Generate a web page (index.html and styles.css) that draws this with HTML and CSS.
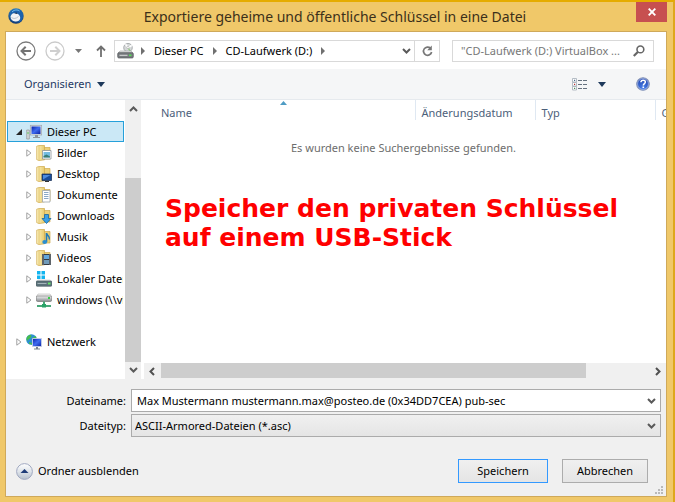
FILE: index.html
```html
<!DOCTYPE html>
<html lang="de">
<head>
<meta charset="utf-8">
<title>Exportiere geheime und öffentliche Schlüssel in eine Datei</title>
<link rel="stylesheet" href="styles.css">
</head>
<body>
<svg class="defs" width="0" height="0" aria-hidden="true">
  <defs>
    <linearGradient id="gold" x1="0" x2="1" y1="0" y2="0"><stop offset="0" stop-color="#fdf3c0"/><stop offset="1" stop-color="#e8cb6c"/></linearGradient>
    <linearGradient id="steel" x1="0" x2="0" y1="0" y2="1"><stop offset="0" stop-color="#f1f2f3"/><stop offset="1" stop-color="#85898d"/></linearGradient>
    <linearGradient id="screen" x1="0" x2="1" y1="0" y2="1"><stop offset="0" stop-color="#0820a8"/><stop offset="0.5" stop-color="#3f6cf0"/><stop offset="1" stop-color="#0a1fa0"/></linearGradient>
    <radialGradient id="bluebird" cx="0.5" cy="0.3" r="0.7"><stop offset="0" stop-color="#45b0ec"/><stop offset="1" stop-color="#0d3472"/></radialGradient>
    <radialGradient id="helpblue" cx="0.5" cy="0.8" r="0.8"><stop offset="0" stop-color="#4b82ec"/><stop offset="1" stop-color="#1b3da6"/></radialGradient>
    <linearGradient id="knob" x1="0" x2="0" y1="0" y2="1"><stop offset="0" stop-color="#ffffff"/><stop offset="0.5" stop-color="#dfe4ea"/><stop offset="1" stop-color="#b4bfcc"/></linearGradient>
  </defs>
  <symbol id="twig" viewBox="0 0 6 8"><path d="M.8.8 5 4 .8 7.200z" fill="#fff" stroke="#a0a0a0"/></symbol>
  <symbol id="folder" viewBox="0 0 16 16">
    <path d="M5 2.500h9v11.500H5z" fill="#ecd078" stroke="#cfa94a" stroke-width=".7"/>
    <path d="M.7 1.200 3 .5h5.500v14.300L3 15.600l-2.300-1z" fill="url(#gold)" stroke="#cfa94a" stroke-width=".7"/>
    <path d="M3 1v14.500" stroke="#dfc069" stroke-width=".8"/>
  </symbol>
  <symbol id="chev-down" viewBox="0 0 9 6"><path d="M1 1l3.500 3.500L8 1" fill="none" stroke="#5a5a5a" stroke-width="2"/></symbol>
  <symbol id="crumb" viewBox="0 0 4 8"><path d="M0 0l4 4-4 4z" fill="#707070"/></symbol>
</svg>

<main class="window">
  <header class="titlebar">
    <svg class="app-icon" width="16" height="16" viewBox="0 0 16 16" aria-hidden="true">
      <circle cx="8" cy="8" r="7.700" fill="url(#bluebird)"/>
      <path d="M1.500 6.500C2 4 4 1.500 7 1l5 .8c2.500 2 3.300 4.500 3 7.200-.8 3-2.500 5-5 6 2-3 2.500-6-.5-8.500z" fill="#1c62ad"/>
      <path d="M2.500 8.500C3.500 6 5.500 4.800 7.500 5.200c3 .3 5 2.600 4.700 5-.4 2.400-2.500 3.600-5 3.300C4.500 13.200 2.500 11.500 2.500 8.500z" fill="#f0f2f5"/>
      <path d="M3.500 9.500c2 1.500 4.500 1.300 7-1" fill="none" stroke="#a9b6c3" stroke-width=".8"/>
      <path d="M4 4C6 1.800 9 1.300 11.500 3" fill="none" stroke="#7cc9f3"/>
      <path d="M6 5.200l2.500-.7L9.500 6z" fill="#17273f"/>
    </svg>
    <h1 class="title">Exportiere geheime und öffentliche Schlüssel in eine Datei</h1>
    <button class="close" type="button" aria-label="Schließen">
      <svg width="8" height="8" viewBox="0 0 8 8"><path d="M.7.7l6.600 6.600M7.300.7.7 7.300" stroke="#fff" stroke-width="1.900"/></svg>
    </button>
  </header>

  <div class="dialog">
    <nav class="navbar">
      <button class="plain" type="button" aria-label="Zurück">
        <svg width="20" height="20" viewBox="0 0 20 20"><circle cx="10" cy="10" r="9" fill="#fff" stroke="#7b7b7b" stroke-width="1.300"/><path d="M15 10H6M9.700 5.700 5.500 10l4.200 4.300" fill="none" stroke="#747474" stroke-width="2"/></svg>
      </button>
      <button class="plain" type="button" aria-label="Vorwärts">
        <svg width="20" height="20" viewBox="0 0 20 20"><circle cx="10" cy="10" r="9" fill="#fff" stroke="#cbcbcb" stroke-width="1.300"/><path d="M5 10h9M10.300 5.700l4.200 4.300-4.200 4.300" fill="none" stroke="#cfcfcf" stroke-width="2"/></svg>
      </button>
      <button class="plain recent" type="button" aria-label="Zuletzt besucht">
        <svg width="7" height="4" viewBox="0 0 7 4"><path d="M0 0h7L3.500 4z" fill="#777"/></svg>
      </button>
      <button class="plain up" type="button" aria-label="Nach oben">
        <svg width="10" height="12" viewBox="0 0 10 12"><path d="M5 12V2M1 5.500 5 1.500l4 4" fill="none" stroke="#707070" stroke-width="1.800"/></svg>
      </button>
      <div class="address">
        <svg class="drive" width="17" height="16" viewBox="0 0 17 16" aria-hidden="true">
          <circle cx="11" cy="4.700" r="4.300" fill="#d5d8d9" stroke="#999da0" stroke-width=".8"/>
          <path d="M11 4.500 8.500 1.200M11 4.500l3.800-2" stroke="#fff" stroke-width="1.500"/>
          <path d="M11 4.500l2 3.500" stroke="#93cf86" stroke-width="1.500"/>
          <circle cx="11" cy="4.500" r="1.200" fill="#fff" stroke="#999" stroke-width=".5"/>
          <path d="M3 8h11l2 2H1z" fill="#e4e5e6" stroke="#9b9d9f" stroke-width=".6"/>
          <rect x=".7" y="9.700" width="15.600" height="5.300" rx="1.200" fill="#767a7d" stroke="#56595b" stroke-width=".7"/>
          <path d="M2.500 12.300h8" stroke="#ddd"/><path d="M12 12.300h2.500" stroke="#55e055" stroke-width="1.600"/>
        </svg>
        <svg width="4" height="8"><use href="#crumb"/></svg>
        <a href="#pc">Dieser PC</a>
        <svg width="4" height="8"><use href="#crumb"/></svg>
        <a href="#d">CD-Laufwerk (D:)</a>
        <svg width="4" height="8"><use href="#crumb"/></svg>
        <button class="plain history" type="button" aria-label="Verlauf"><svg width="9" height="6"><use href="#chev-down"/></svg></button>
        <button class="plain reload" type="button" aria-label="Aktualisieren">
          <svg width="11" height="12" viewBox="0 0 11 12"><path d="M8.500 3.300A4.100 4.100 0 1 0 9.600 7" fill="none" stroke="#777" stroke-width="1.700"/><path d="M9.800.5v4.700H5.200z" fill="#777"/></svg>
        </button>
      </div>
      <form class="search" role="search">
        <input type="search" aria-label="Suchen" placeholder="&quot;CD-Laufwerk (D:) VirtualBox ...">
        <svg width="12" height="12" viewBox="0 0 12 12" aria-hidden="true"><circle cx="7.400" cy="4.400" r="3.400" fill="none" stroke="#666" stroke-width="1.600"/><path d="M5 6.800.8 11" stroke="#666" stroke-width="2.200"/></svg>
      </form>
    </nav>

    <div class="commandbar">
      <button class="plain organise" type="button">Organisieren
        <svg width="8" height="5" viewBox="0 0 8 5"><path d="M0 0h8L4 5z" fill="#1e395b"/></svg>
      </button>
      <button class="plain view" type="button" aria-label="Ansicht">
        <svg width="16" height="13" viewBox="0 0 16 13">
          <path d="M.5.500h4v3.500h-4zM.5 4.500h4V8h-4zM.5 8.500h4V12h-4z" fill="#fff" stroke="#a3adb8" stroke-width=".8"/>
          <path d="M2 1.700h1.200v1.200H2z" fill="#47698d"/><path d="M2 5.700h1.200v1.200H2z" fill="#b33"/><path d="M2 9.700h1.200v1.200H2z" fill="#478d55"/>
          <path d="M6 2.500h4M11 2.500h4M6 6.500h4M11 6.500h4M6 10.500h4M11 10.500h4" stroke="#65717e"/>
        </svg>
        <svg width="8" height="5" viewBox="0 0 8 5"><path d="M0 0h8L4 5z" fill="#1e395b"/></svg>
      </button>
      <button class="plain help" type="button" aria-label="Hilfe">
        <svg width="14" height="14" viewBox="0 0 14 14"><circle cx="7" cy="7" r="6.300" fill="url(#helpblue)" stroke="#8996b6" stroke-width="1.100"/><circle cx="7" cy="7" r="5.400" fill="none" stroke="#bed0f5" stroke-width=".6"/><path d="M4.900 5.300C5 3.700 6 3.200 7.200 3.200c1.300 0 2.200.7 2.200 1.900C9.400 6.700 7.300 6.700 7.300 8.500" fill="none" stroke="#fff" stroke-width="1.500"/><path d="M6.500 9.500h1.600V11H6.500z" fill="#fff"/></svg>
      </button>
    </div>

    <div class="browser">
      <aside class="sidebar">
        <ul class="tree">
          <li class="node root selected">
            <svg width="6" height="6" viewBox="0 0 6 6"><path d="M6 0v6H0z" fill="#262626"/></svg>
            <svg class="ico" width="16" height="16" viewBox="0 0 16 16"><path d="M.7 6h2.600v9H.7z" fill="#d5d8da" stroke="#888" stroke-width=".6"/><path d="M2 8v2" stroke="#5dca5d"/><rect x="4.300" y="1.300" width="11.400" height="9.700" fill="#dfe3e8" stroke="#9ba3ab" stroke-width=".7"/><path d="M5.500 2.500h9v7.500h-9z" fill="url(#screen)"/><path d="M9 11h3v2h2v1H7v-1h2z" fill="#8e969d"/></svg>
            <span>Dieser PC</span>
          </li>
          <li class="node child"><svg width="6" height="8"><use href="#twig"/></svg>
            <svg class="ico" width="16" height="16" viewBox="0 0 16 16"><use href="#folder"/><path d="M6.500 5.500h8.500v8.500H6.500z" fill="#fff" stroke="#8b9298" stroke-width=".8"/><path d="M7.500 7h6.500v5.500H7.500z" fill="#74bce2"/><path d="M7.500 12.500V11l3-1.500 3.500 2v1z" fill="#397d75"/></svg><span>Bilder</span></li>
          <li class="node child"><svg width="6" height="8"><use href="#twig"/></svg>
            <svg class="ico" width="16" height="16" viewBox="0 0 16 16"><use href="#folder"/><path d="M6 8h9.500v6.500H6z" fill="#184c9b" stroke="#12284d" stroke-width=".7"/><path d="M7 9h7.500L7 13.500z" fill="#4d8ddf"/><path d="M9 15.500h4" stroke="#333"/></svg><span>Desktop</span></li>
          <li class="node child"><svg width="6" height="8"><use href="#twig"/></svg>
            <svg class="ico" width="16" height="16" viewBox="0 0 16 16"><use href="#folder"/><path d="M6.500 3.500h7.500v11.500H6.500z" fill="#fff" stroke="#9da5ab" stroke-width=".8"/><path d="M8 5.500h4.500M8 7.500h4.500M8 9.500h4.500M8 11.500h4.500" stroke="#6b92b9" stroke-width=".8"/></svg><span>Dokumente</span></li>
          <li class="node child"><svg width="6" height="8"><use href="#twig"/></svg>
            <svg class="ico" width="16" height="16" viewBox="0 0 16 16"><use href="#folder"/><path d="M8.500 6.500h4v4H15l-4.500 5-4.500-5h2.500z" fill="#39a0e8" stroke="#17649f" stroke-width=".8"/></svg><span>Downloads</span></li>
          <li class="node child"><svg width="6" height="8"><use href="#twig"/></svg>
            <svg class="ico" width="16" height="16" viewBox="0 0 16 16"><use href="#folder"/><path d="M10.500 13V4c0 2.500 4 3 2.800 6.500" fill="none" stroke="#217ab8" stroke-width="1.600"/><ellipse cx="8.700" cy="13" rx="2.400" ry="1.900" fill="#2b8ed0"/></svg><span>Musik</span></li>
          <li class="node child"><svg width="6" height="8"><use href="#twig"/></svg>
            <svg class="ico" width="16" height="16" viewBox="0 0 16 16"><use href="#folder"/><path d="M6 4h9v11H6z" fill="#333b42"/><path d="M8 5h5v4H8z" fill="#62a7dc"/><path d="M8 10h5v4H8z" fill="#719bb9"/><path d="M7 4.500V15M14 4.500V15" stroke="#ddd" stroke-dasharray="1 1"/></svg><span>Videos</span></li>
          <li class="node child"><svg width="6" height="8"><use href="#twig"/></svg>
            <svg class="ico" width="16" height="16" viewBox="0 0 16 16"><path d="M1 0h3.500v3.500H1zM5.500 0H9v3.500H5.500zM1 4.500h3.500V8H1zM5.500 4.500H9V8H5.500z" fill="#12b4ef"/><path d="M2 8.500h12l2 2H0z" fill="#d9dcde"/><rect y="10" width="16" height="5.300" rx="1.200" fill="#5c727a" stroke="#465960" stroke-width=".6"/><path d="M1.500 12.500h9" stroke="#a4b5ba"/><path d="M12 12.500h2.500" stroke="#62ed62" stroke-width="1.800"/></svg><span>Lokaler Datenträger</span></li>
          <li class="node child"><svg width="6" height="8"><use href="#twig"/></svg>
            <svg class="ico" width="16" height="16" viewBox="0 0 16 16"><path d="M2 2h12l2 3H0z" fill="#f1f1f1" stroke="#aaa" stroke-width=".5"/><rect x=".3" y="4" width="15.400" height="5.500" rx="1.400" fill="url(#steel)" stroke="#777" stroke-width=".7"/><path d="M12 6h2" stroke="#38cc48" stroke-width="1.800"/><path d="M8 9.500V14M1 14h14" stroke="#48a878" stroke-width="2"/><path d="M6 12h4v3.500H6z" fill="#27a367"/></svg><span>windows (\\vboxsrv)</span></li>
          <li class="node root network"><svg width="6" height="8"><use href="#twig"/></svg>
            <svg class="ico" width="16" height="16" viewBox="0 0 16 16"><circle cx="5.500" cy="5.500" r="5.300" fill="#2c8fd2"/><path d="M2 2c3-2.500 4-1 3 1S2.500 5 1 7C0 5 .5 3 2 2zM6 4l4-2 .7 4-3 2zM3 8l3 1v1.700l-3-1z" fill="#45bd4d"/><path d="M6.500 4.500h9v8h-9z" fill="url(#screen)" stroke="#c6d0e8" stroke-width=".9"/><path d="M10 13h2v1.500h2v1H8v-1h2z" fill="#78838f"/></svg><span>Netzwerk</span></li>
        </ul>
        <div class="vscroll" aria-hidden="true">
          <svg width="9" height="6" class="flip"><use href="#chev-down"/></svg>
          <div class="vtrack"><div class="vthumb"></div></div>
          <svg width="9" height="6"><use href="#chev-down"/></svg>
        </div>
      </aside>

      <section class="files">
        <table class="list">
          <thead>
            <tr>
              <th class="c-name" scope="col" aria-sort="ascending">Name<svg class="sort" width="7" height="4" viewBox="0 0 7 4"><path d="M0 4 3.500 0 7 4z" fill="#4f9cc4"/></svg></th>
              <th class="c-col" scope="col">Änderungsdatum</th>
              <th class="c-col" scope="col">Typ</th>
              <th class="c-last" scope="col">Größe</th>
            </tr>
          </thead>
          <tbody><tr><td colspan="4">Es wurden keine Suchergebnisse gefunden.</td></tr></tbody>
        </table>
        <p class="note">Speicher den privaten Schlüssel<br>auf einem USB-Stick</p>
        <div class="hscroll" aria-hidden="true">
          <svg width="6" height="9" viewBox="0 0 6 9"><path d="M5 1 1.500 4.500 5 8" fill="none" stroke="#505050" stroke-width="2"/></svg>
          <div class="htrack"><div class="hthumb"></div></div>
          <svg width="6" height="9" viewBox="0 0 6 9"><path d="M1 1l3.500 3.500L1 8" fill="none" stroke="#505050" stroke-width="2"/></svg>
        </div>
      </section>
    </div>

    <form class="form">
      <div class="fields">
        <label for="fname">Dateiname:</label>
        <div class="combo">
          <input id="fname" type="text" value="Max Mustermann mustermann.max@posteo.de (0x34DD7CEA) pub-sec">
          <svg width="9" height="6"><use href="#chev-down"/></svg>
        </div>
        <label for="ftype">Dateityp:</label>
        <div class="combo shaded">
          <select id="ftype"><option>ASCII-Armored-Dateien (*.asc)</option></select>
          <svg width="9" height="6"><use href="#chev-down"/></svg>
        </div>
      </div>
      <div class="actions">
        <button class="plain fold" type="button">
          <svg width="17" height="17" viewBox="0 0 17 17"><circle cx="8.500" cy="8.500" r="7.900" fill="url(#knob)" stroke="#a0a8c0"/><path d="M4.500 10h8l-4-4z" fill="#1e3c78"/></svg>
          Ordner ausblenden
        </button>
        <button class="btn primary" type="button">Speichern</button>
        <button class="btn" type="button">Abbrechen</button>
      </div>
      <svg class="grip" width="8" height="8" viewBox="0 0 8 8" aria-hidden="true"><path d="M6 0h2v2H6zM3 3h2v2H3zM6 3h2v2H6zM0 6h2v2H0zM3 6h2v2H3zM6 6h2v2H6z" fill="#b9b9b9"/></svg>
    </form>
  </div>
</main>
</body>
</html>
```
FILE: styles.css
```css
* {
  box-sizing: border-box;
}

body {
  margin: 0;
  font-family: "Noto Sans", "Open Sans", sans-serif;
  font-size: 11px;
  line-height: 16px;
  color: #000;
}

svg {
  display: block;
  flex: none;
}

.defs {
  position: absolute;
}

button,
input,
select {
  font: inherit;
  color: inherit;
}

.plain {
  display: flex;
  align-items: center;
  padding: 0;
  border: 0;
  background: none;
}

.window {
  display: flex;
  flex-direction: column;
  min-height: 100vh;
  padding: 0 6px 5px 5px;
  background: #f0c869;
  border-top: 2px solid #e5ac00;
  border-right: 2px solid #dfa71c;
}

.titlebar {
  display: flex;
  align-items: flex-start;
  height: 29px;
  padding-left: 3px;
}

.app-icon {
  margin-top: 6px;
}

.title {
  flex: 1;
  margin: 0;
  padding-left: 10px;
  font-size: 14px;
  font-weight: 400;
  line-height: 29px;
  text-align: center;
  white-space: nowrap;
  color: #3c301a;
}

.close {
  display: grid;
  place-items: center;
  width: 31px;
  height: 20px;
  padding: 0;
  border: 0;
  background: #c75050;
}

.dialog {
  flex: 1;
  display: flex;
  flex-direction: column;
  min-width: 0;
  border: 1px solid #cfa95a;
  background: #f0f0f0;
}

.navbar {
  display: flex;
  align-items: center;
  height: 37px;
  padding: 0 12px 0 10px;
  background: #fff;
}

.navbar .plain + .plain {
  margin-left: 9px;
}

.navbar .plain.recent {
  margin-left: 10px;
}

.navbar .plain.up {
  margin: 0 8px 0 14px;
}

.address,
.search {
  display: flex;
  align-items: center;
  height: 22px;
  border: 1px solid #d9d9d9;
  background: #fff;
}

.address {
  flex: 1;
  gap: 9px;
  min-width: 0;
  padding-left: 2px;
}

.address a {
  color: inherit;
  text-decoration: none;
  white-space: nowrap;
}

.drive {
  margin-right: -2px;
}

.history {
  margin-left: auto;
}

.navbar .plain.reload {
  justify-content: center;
  align-self: stretch;
  width: 25px;
  margin-left: -6px;
  border-left: 1px solid #d9d9d9;
}

.search {
  flex: 0 1 202px;
  margin-left: 12px;
  padding: 0 8px;
}

.search input {
  flex: 1;
  min-width: 0;
  padding: 0;
  border: 0;
  outline: 0;
  background: none;
}

.search input::placeholder {
  color: #777;
  opacity: 1;
}

.commandbar {
  display: flex;
  align-items: center;
  height: 31px;
  padding: 0 16px 0 18px;
  background: #f5f6f7;
  border-bottom: 1px solid #e6eaee;
  color: #1e3963;
}

.organise {
  gap: 6px;
}

.view {
  gap: 10px;
  margin-left: auto;
}

.help {
  margin-left: 30px;
}

.browser {
  flex: 1;
  display: flex;
  min-height: 0;
  background: #fff;
}

.sidebar {
  display: flex;
  flex: 0 0 135px;
  min-width: 0;
}

.tree {
  flex: 1;
  min-width: 0;
  margin: 0;
  padding: 21px 1px 0;
  list-style: none;
  overflow: hidden;
}

.node {
  display: flex;
  align-items: center;
  height: 21px;
  border: 1px solid transparent;
  white-space: nowrap;
  overflow: hidden;
}

.root {
  padding-left: 8px;
}

.child {
  padding-left: 18px;
}

.ico {
  margin: 0 5px 0 4px;
}

.selected {
  background: #cbe8f6;
  border-color: #26a0da;
}

.network {
  margin-top: 21px;
}

.vscroll {
  display: flex;
  flex-direction: column;
  align-items: center;
  width: 16px;
  padding: 6px 0;
  background: #f0f0f0;
}

.flip {
  transform: rotate(180deg);
}

.vtrack {
  flex: 1;
  display: flex;
  align-items: flex-end;
  align-self: stretch;
  margin: 5px 0;
}

.vthumb {
  width: 100%;
  height: 75%;
  background: #cdcdcd;
}

.files {
  flex: 1;
  display: flex;
  flex-direction: column;
  min-width: 0;
  overflow: hidden;
}

.list {
  width: 100%;
  table-layout: fixed;
  border-collapse: collapse;
}

.list th {
  height: 20px;
  padding: 6px 0 0 6px;
  border-left: 1px solid #dfe8f2;
  font-weight: 400;
  line-height: 14px;
  text-align: left;
  white-space: nowrap;
  overflow: hidden;
  color: #4c607a;
}

.list .c-name {
  position: relative;
  padding-left: 20px;
  border-left: 0;
}

.c-col {
  width: 120px;
}

.c-last {
  width: 11px;
}

.sort {
  position: absolute;
  top: 1px;
  left: 51%;
}

.list td {
  padding: 20px 0 0;
  text-align: center;
  color: #6d6d6d;
}

.note {
  margin: 38px 0 0 24px;
  font: bold 25px/29px "DejaVu Sans", sans-serif;
  white-space: nowrap;
  color: #f00;
}

.hscroll {
  display: flex;
  align-items: center;
  height: 16px;
  margin: auto 0 0 3px;
  padding: 0 5px;
  background: #f0f0f0;
}

.htrack {
  flex: 1;
  align-self: stretch;
  margin: 0 6px;
}

.hthumb {
  width: 87%;
  height: 15px;
  background: #cdcdcd;
}

.form {
  position: relative;
  padding: 10px 5px 13px 10px;
}

.fields {
  display: grid;
  grid-template-columns: 110px 1fr;
  gap: 2px 5px;
  align-items: center;
}

.fields label {
  text-align: right;
}

.combo {
  display: flex;
  align-items: center;
  height: 23px;
  padding-right: 4px;
  border: 1px solid #ababab;
  background: #fff;
}

.shaded {
  background: linear-gradient(#f0f0f0, #e5e5e5);
}

.combo input,
.combo select {
  flex: 1;
  min-width: 0;
  padding: 0 5px;
  border: 0;
  outline: 0;
  background: none;
  appearance: none;
}

.combo select {
  padding: 0 3px;
}

.actions {
  display: flex;
  align-items: center;
  gap: 14px;
  margin-top: 22px;
  padding-right: 13px;
}

.fold {
  gap: 5px;
  margin-right: auto;
}

.btn {
  width: 86px;
  height: 24px;
  padding: 0;
  border: 1px solid #acacac;
  background: linear-gradient(#f0f0f0, #e5e5e5);
}

.primary {
  width: 90px;
  border-color: #3399ff;
}

.grip {
  position: absolute;
  right: 3px;
  bottom: 2px;
}
```
